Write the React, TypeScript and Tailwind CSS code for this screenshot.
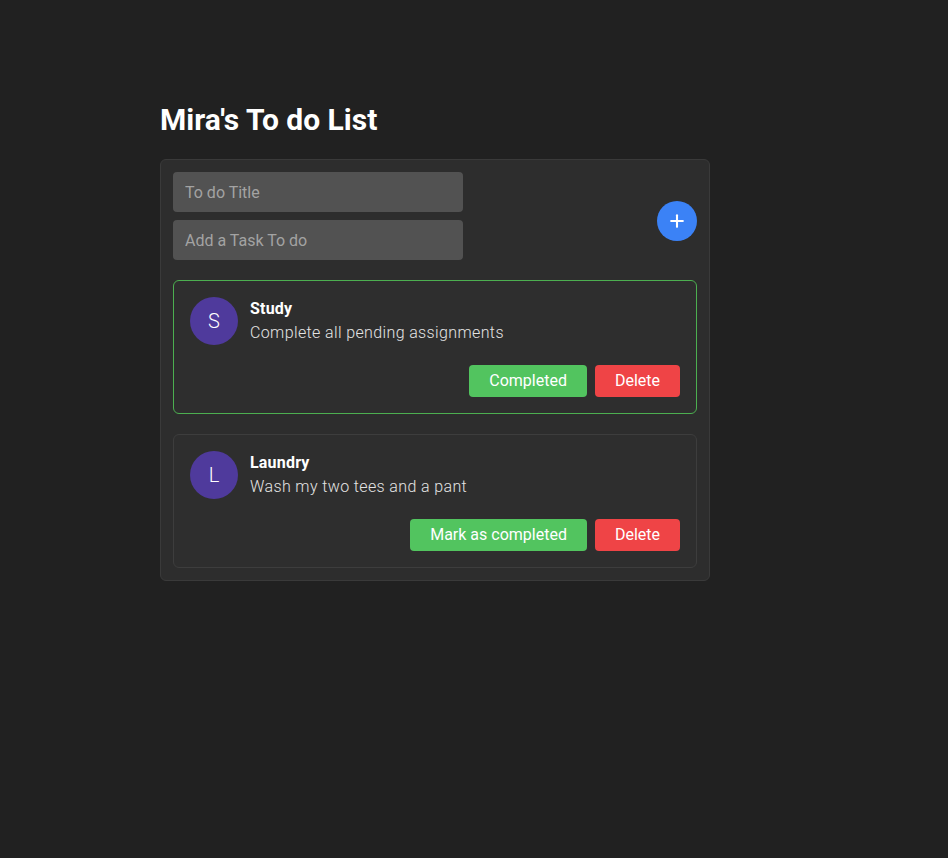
import { Plus } from "lucide-react"

interface Todo {
    title: string
    desc: string
    done: boolean
}

const todos: Todo[] = [
    { title: "Study", desc: "Complete all pending assignments", done: true },
    { title: "Laundry", desc: "Wash my two tees and a pant", done: false },
]

function TodoCard({ todo }: { todo: Todo }) {
    return (
        <div
            className={
                todo.done
                    ? "rounded-md border border-[#4caf50] bg-[#2e2e2e] p-4"
                    : "rounded-md border border-[#3d3d3d] bg-[#2e2e2e] p-4"
            }
        >
            <div className="flex gap-3">
                <div className="flex h-12 w-12 shrink-0 items-center justify-center rounded-full bg-[#4f3a9c] text-[20px] font-light text-white">
                    {todo.title[0]}
                </div>
                <div className="leading-6">
                    <div className="text-base font-bold tracking-[0.2px] text-white">{todo.title}</div>
                    <div className="text-base font-light tracking-[0.375px] text-[#e4e4e4]">{todo.desc}</div>
                </div>
            </div>
            <div className="mt-5 flex justify-end gap-2">
                <button className="h-8 rounded bg-[#52c45f] px-5 text-base text-white">
                    {todo.done ? "Completed" : "Mark as completed"}
                </button>
                <button className="h-8 rounded bg-[#ef4446] px-5 text-base text-white">Delete</button>
            </div>
        </div>
    )
}

export default function App() {
    return (
        <div className="min-h-[858px] bg-[#212121] pt-[100px] font-['Roboto',sans-serif]">
            <div className="ml-[160px] w-[550px]">
                <h1 className="mb-[19px] text-[30px] font-bold leading-[40px] text-white">Mira's To do List</h1>
                <div className="rounded-md border border-[#3a3a3a] bg-[#2d2d2d] p-3">
                    <div className="flex items-start justify-between">
                        <div className="flex w-[290px] flex-col gap-2">
                            <input
                                placeholder="To do Title"
                                className="h-10 rounded-sm bg-[#525252] px-3 text-base text-white outline-none placeholder:text-[#a3a3a3]"
                            />
                            <input
                                placeholder="Add a Task To do"
                                className="h-10 rounded-sm bg-[#525252] px-3 text-base text-white outline-none placeholder:text-[#a3a3a3]"
                            />
                        </div>
                        <button className="mt-[29px] flex h-10 w-10 items-center justify-center rounded-full bg-[#3b82f6] text-white">
                            <Plus size={20} strokeWidth={2.5} />
                        </button>
                    </div>
                    <div className="mt-5 flex flex-col gap-5">
                        {todos.map((t) => (
                            <TodoCard key={t.title} todo={t} />
                        ))}
                    </div>
                </div>
            </div>
        </div>
    )
}
